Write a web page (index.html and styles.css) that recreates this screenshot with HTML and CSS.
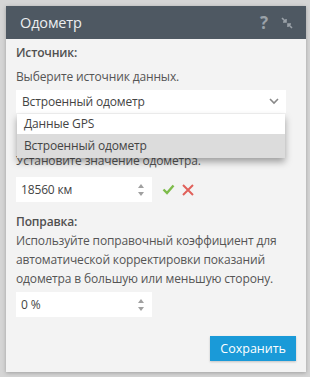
FILE: index.html
```html
<!DOCTYPE html>
<html lang="ru">
<head>
    <meta charset="UTF-8">
    <title>Одометр</title>
    <link rel="stylesheet" href="styles.css">
</head>
<body>
    <div class="dialog">
        <div class="dialog-header">
            <span class="dialog-title">Одометр</span>
            <span class="header-icons">
                <span class="help">?</span>
                <svg class="collapse" width="12" height="12" viewBox="0 0 12 12">
                    <path d="M1 1 L5 5 M5 2 L5 5 L2 5" stroke="#9aa1a8" stroke-width="1.6" fill="none"/>
                    <path d="M11 11 L7 7 M7 10 L7 7 L10 7" stroke="#9aa1a8" stroke-width="1.6" fill="none"/>
                </svg>
            </span>
        </div>
        <div class="dialog-body">
            <div class="label">Источник:</div>
            <div class="hint">Выберите источник данных.</div>
            <div class="select-wrap">
                <div class="select">
                    <span>Встроенный одометр</span>
                    <svg width="10" height="7" viewBox="0 0 10 7"><path d="M1 1 L5 5 L9 1" stroke="#888" stroke-width="1.6" fill="none"/></svg>
                </div>
                <ul class="dropdown">
                    <li>Данные GPS</li>
                    <li class="active">Встроенный одометр</li>
                </ul>
            </div>
            <div class="hint hint-odo">Установите значение одометра.</div>
            <div class="input-row">
                <div class="num-input">
                    <span>18560 км</span>
                    <span class="spin"><i class="up"></i><i class="down"></i></span>
                </div>
                <svg class="ok" width="13" height="11" viewBox="0 0 13 11"><path d="M1.5 5.5 L5 9 L11.5 1.5" stroke="#7dbb4a" stroke-width="2.4" fill="none"/></svg>
                <svg class="cancel" width="12" height="12" viewBox="0 0 12 12"><path d="M1 1 L11 11 M11 1 L1 11" stroke="#e0605a" stroke-width="2" fill="none"/></svg>
            </div>
            <div class="label label-fix">Поправка:</div>
            <div class="text">Используйте поправочный коэффициент для автоматической корректировки показаний одометра в большую или меньшую сторону.</div>
            <div class="num-input">
                <span>0 %</span>
                <span class="spin"><i class="up"></i><i class="down"></i></span>
            </div>
            <div class="actions">
                <button class="btn">Сохранить</button>
            </div>
        </div>
    </div>
</body>
</html>
```

FILE: styles.css
```css
body {
    margin: 0;
    background: #d5d5d5;
    font-family: 'Open Sans', 'Noto Sans', Arial, sans-serif;
    font-size: 12px;
    letter-spacing: -0.15px;
    color: #555;
}
.dialog {
    margin: 6px;
    width: 300px;
    height: 366px;
    background: #f3f3f3;
    box-shadow: 0 1px 4px rgba(0,0,0,0.25);
    display: flex;
    flex-direction: column;
}
.dialog-header {
    height: 33px;
    flex-shrink: 0;
    background: #4e5862;
    display: flex;
    align-items: center;
    justify-content: space-between;
    padding: 0 13px 0 14px;
}
.dialog-title {
    color: #eceef0;
    font-size: 14.5px;
}
.header-icons {
    display: flex;
    align-items: center;
    gap: 13px;
}
.help {
    color: #9aa1a8;
    font-size: 17px;
    font-weight: bold;
}
.dialog-body {
    padding: 4px 10px 11px 10px;
    flex: 1;
    display: flex;
    flex-direction: column;
}
.label {
    font-weight: 600;
    color: #505050;
    line-height: 19px;
}
.hint {
    line-height: 19px;
    margin-top: 5px;
    color: #555;
}
.select-wrap {
    position: relative;
    margin-top: 4px;
    margin-right: 10px;
}
.select {
    height: 23px;
    background: #fff;
    display: flex;
    align-items: center;
    justify-content: space-between;
    padding: 0 7px 0 6px;
    color: #444;
}
.dropdown {
    position: absolute;
    top: 24px;
    left: 1px;
    right: 1px;
    margin: 0;
    padding: 0;
    list-style: none;
    background: #fff;
    box-shadow: 0 4px 7px rgba(0,0,0,0.35);
    z-index: 2;
}
.dropdown li {
    height: 20px;
    line-height: 20px;
    padding: 0 7px;
    color: #444;
}
.dropdown li.active {
    background: #dcdcdc;
    height: 24px;
    line-height: 24px;
}
.hint-odo {
    margin-top: 38px;
}
.input-row {
    display: flex;
    align-items: center;
    gap: 7px;
    margin-top: 7px;
}
.num-input {
    width: 136px;
    height: 25px;
    background: #fff;
    box-sizing: border-box;
    display: flex;
    align-items: center;
    justify-content: space-between;
    padding: 0 8px 0 5px;
    color: #444;
}
.input-row .num-input {
    margin-right: 3px;
}
.spin {
    display: flex;
    flex-direction: column;
    gap: 4px;
}
.spin i {
    width: 0;
    height: 0;
    border-left: 3.5px solid transparent;
    border-right: 3.5px solid transparent;
}
.spin .up {
    border-bottom: 4px solid #a0a0a0;
}
.spin .down {
    border-top: 4px solid #a0a0a0;
}
.label-fix {
    margin-top: 10px;
}
.text {
    line-height: 19px;
    padding-right: 10px;
    margin-bottom: 4px;
}
.actions {
    margin-top: auto;
    display: flex;
    justify-content: flex-end;
}
.btn {
    background: #1a9ad8;
    color: #fff;
    border: none;
    font-family: inherit;
    font-size: 12.5px;
    letter-spacing: 0;
    height: 25px;
    padding: 0 10px;
    box-shadow: 0 1px 2px rgba(0,0,0,0.2);
}
```
